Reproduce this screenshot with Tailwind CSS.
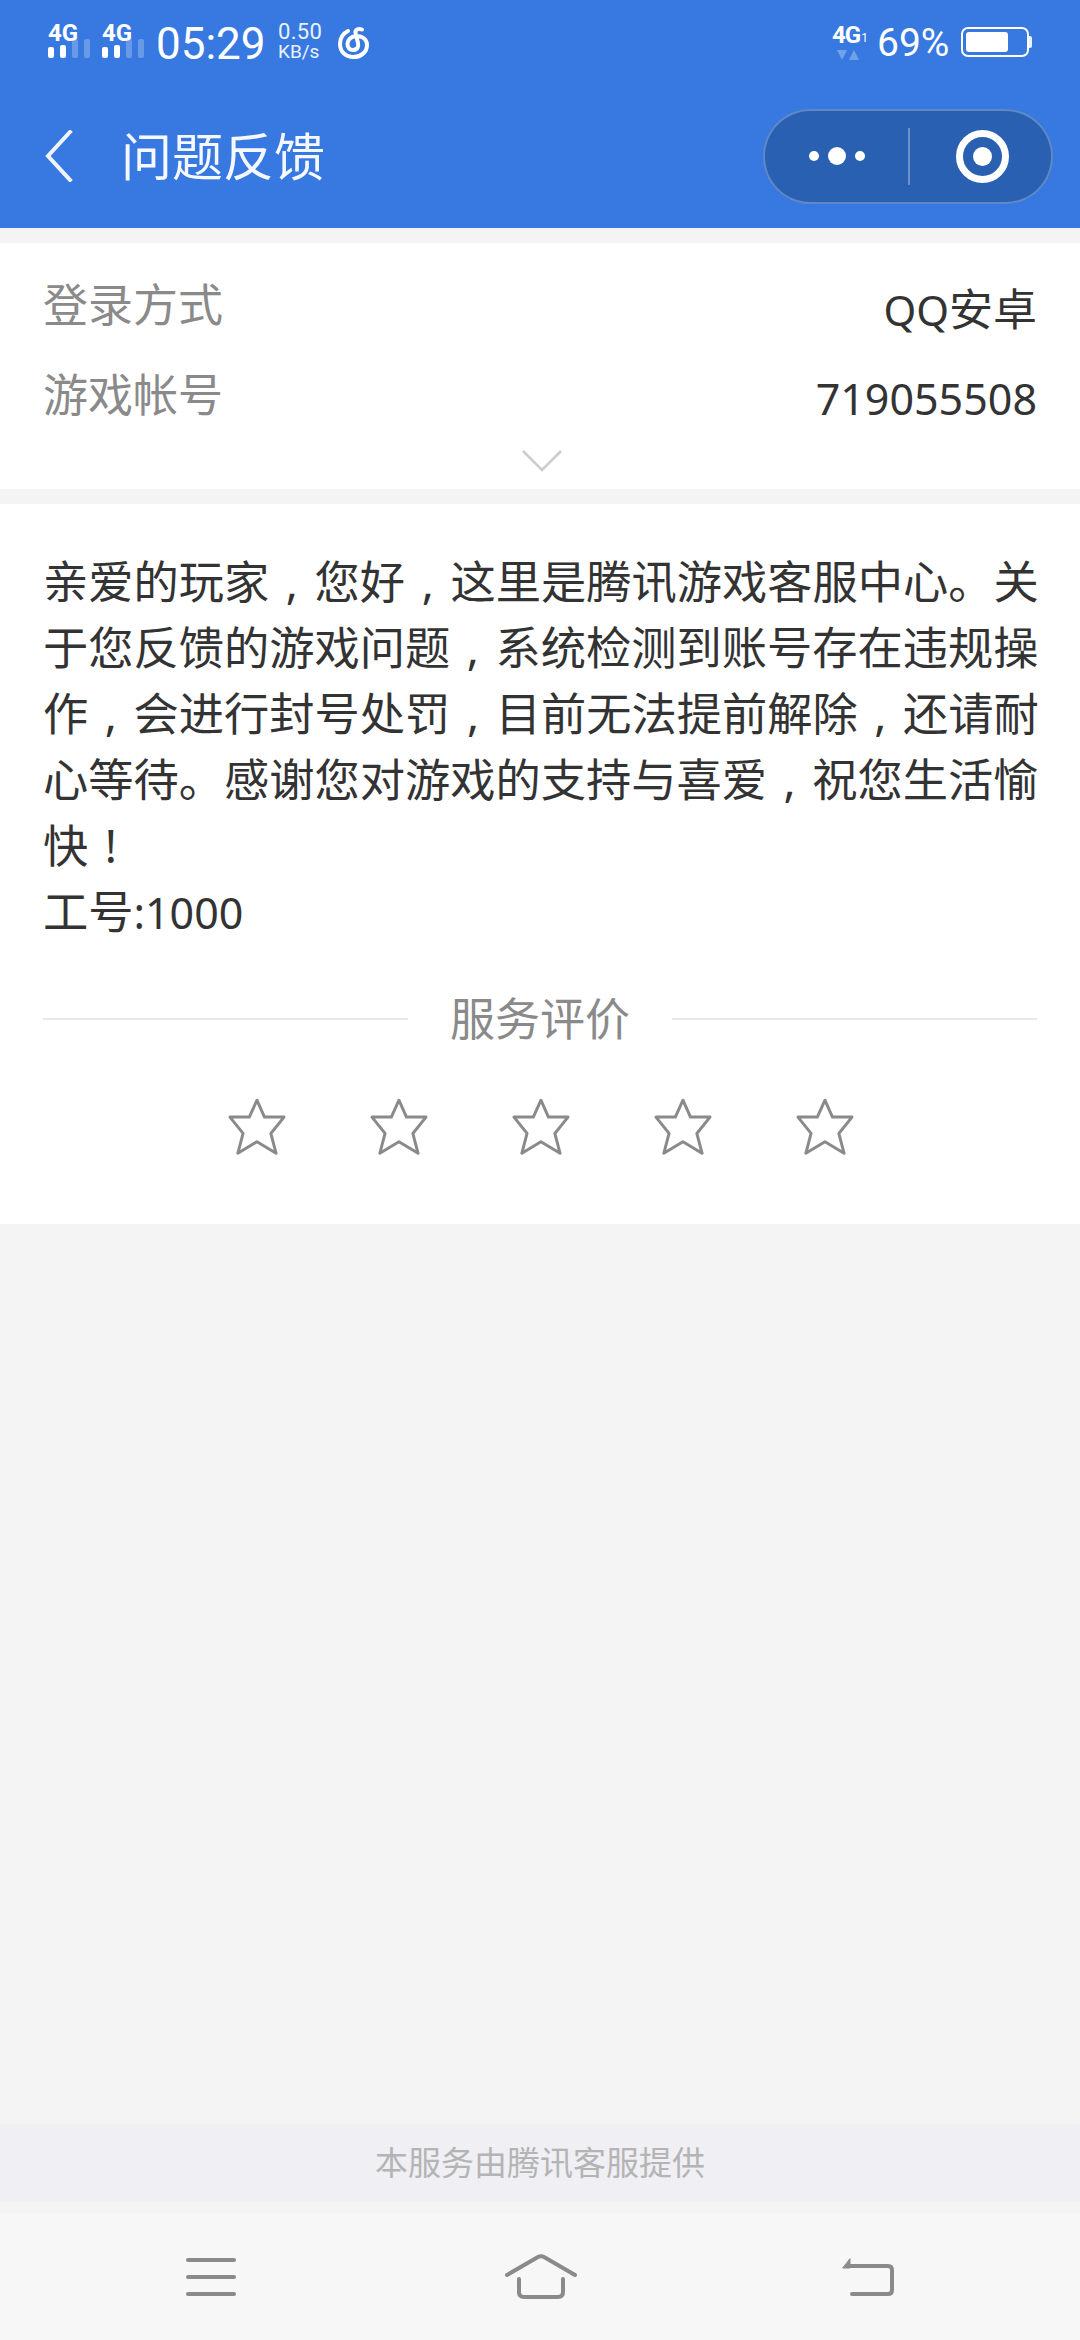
<!DOCTYPE html>
<html lang="zh-CN">
  <head>
    <meta charset="UTF-8" />
    <meta name="viewport" content="width=device-width, initial-scale=1.0" />
    <title>问题反馈</title>
    <script src="https://cdn.jsdelivr.net/npm/@tailwindcss/browser@4"></script>
  </head>
  <body class="bg-[#f4f4f4] font-['Noto_Sans','Noto_Sans_CJK_SC',sans-serif]">
    <div class="flex flex-col w-[1080px] h-[2340px] overflow-hidden">
      <!-- header: status bar + title bar -->
      <header class="bg-[#3779e0] text-white h-[228px] shrink-0">
        <div class="flex items-start h-[84px] pl-[48px] pr-[48px] font-['Roboto',sans-serif]">
          <!-- sim 1 -->
          <div class="w-[54px] pt-[20px]">
            <div class="text-[24px] leading-[26px] font-bold">4G</div>
            <div class="flex items-end gap-[6px] h-[19px] -mt-[7px]">
              <span class="w-[6px] h-[11px] rounded-[2px] bg-white"></span>
              <span class="w-[6px] h-[13px] rounded-[2px] bg-white"></span>
              <span class="w-[6px] h-[19px] rounded-[2px] bg-white/25"></span>
              <span class="w-[6px] h-[19px] rounded-[2px] bg-white/25"></span>
            </div>
          </div>
          <!-- sim 2 -->
          <div class="w-[54px] pt-[20px]">
            <div class="text-[24px] leading-[26px] font-bold">4G</div>
            <div class="flex items-end gap-[6px] h-[19px] -mt-[7px]">
              <span class="w-[6px] h-[11px] rounded-[2px] bg-white"></span>
              <span class="w-[6px] h-[13px] rounded-[2px] bg-white"></span>
              <span class="w-[6px] h-[19px] rounded-[2px] bg-white/25"></span>
              <span class="w-[6px] h-[19px] rounded-[2px] bg-white/25"></span>
            </div>
          </div>
          <div class="text-[44px] leading-[50px] pt-[19px] w-[122px] h-[84px]">05:29</div>
          <div class="pt-[21px] w-[60px] text-white/90">
            <div class="text-[22px] leading-[22px] tracking-[0.3px]">0.50</div>
            <div class="text-[19px] leading-[17px]">KB/s</div>
          </div>
          <!-- music app notification -->
          <svg class="mt-[26px]" width="31" height="33" viewBox="0 0 31 33" fill="none" stroke="white" stroke-width="4" stroke-linecap="round">
            <path d="M10 5 C4 8 2 13 2 18 C2 26 8 31 15.500 31 C23 31 29 26 29 19 C29 13 24 10 19 10 C13 10 9.500 14 9.500 18 C9.500 22 12 24 15 24 C19 24 21 21 20 17 L17.500 7 C17 4 20 2 24 3.500" />
          </svg>
          <div class="flex-1"></div>
          <!-- data type -->
          <div class="w-[45px] pt-[23px]">
            <div class="text-[24px] leading-[24px] font-bold tracking-[-1px]">4G<span class="text-[12px] font-normal align-[1px] ml-[1px]">1</span></div>
            <svg width="32" height="11" viewBox="0 0 32 11" fill="white">
              <path d="M5 0 H15 L10 10 Z" fill-opacity="0.3" />
              <path d="M17 10 H27 L22 0 Z" fill-opacity="0.3" />
            </svg>
          </div>
          <div class="text-[39px] leading-[44px] pt-[21px] w-[84px]">69%</div>
          <!-- battery -->
          <div class="flex items-center mt-[27px]">
            <div class="w-[68px] h-[30px] rounded-[7px] border-[2px] border-white p-[3px]">
              <div class="w-[42px] h-full rounded-[3px] bg-white"></div>
            </div>
            <div class="w-[3px] h-[12px] rounded-r-[2px] bg-white/90"></div>
          </div>
        </div>
        <div class="flex items-center h-[144px] pl-[45px] pr-[27px]">
          <svg width="28" height="52" viewBox="0 0 28 52" fill="none" stroke="#eef3fc" stroke-width="4" stroke-linecap="square">
            <path d="M25 2 L3 26 L25 50" />
          </svg>
          <h1 class="ml-[48px] text-[51px] leading-none font-normal text-white/95">问题反馈</h1>
          <div class="flex-1"></div>
          <!-- capsule -->
          <div class="flex items-center w-[290px] h-[95px] rounded-full bg-[#2a60b2] border-[2px] border-white/25">
            <div class="flex items-center justify-center gap-[9px] w-[143px]">
              <span class="w-[10px] h-[10px] rounded-full bg-white"></span>
              <span class="w-[18px] h-[18px] rounded-full bg-white"></span>
              <span class="w-[10px] h-[10px] rounded-full bg-white"></span>
            </div>
            <div class="w-[2px] h-[57px] bg-white/30"></div>
            <div class="flex flex-1 items-center justify-center pl-[4px]">
              <div class="flex items-center justify-center w-[53px] h-[53px] rounded-full border-[7px] border-white">
                <span class="w-[19px] h-[19px] rounded-full bg-white"></span>
              </div>
            </div>
          </div>
        </div>
      </header>

      <main class="flex-1 flex flex-col pt-[15px]">
        <!-- account info -->
        <section class="bg-white h-[246px] px-[43px]">
          <div class="flex justify-between pt-[32px] h-[122px]">
            <span class="text-[45px] leading-[60px] text-[#8a8a8a]">登录方式</span>
            <span class="text-[44px] leading-[60px] text-[#333] mt-[4px]"><span class="text-[42px]">QQ</span>安卓</span>
          </div>
          <div class="flex justify-between h-[85px]">
            <span class="text-[45px] leading-[60px] text-[#8a8a8a]">游戏帐号</span>
            <span class="text-[43px] leading-[60px] text-[#333] mt-[4px]">719055508</span>
          </div>
          <svg class="mx-auto translate-x-[2px]" width="40" height="22" viewBox="0 0 40 22" fill="none" stroke="#cccccc" stroke-width="2.500">
            <path d="M1 1 L20 20 L39 1" />
          </svg>
        </section>

        <!-- reply: one div per line, narrow punctuation centred in a full-width cell -->
        <section class="bg-white mt-[15px] h-[720px] px-[43px] pt-[45px]">
          <div class="text-[45.25px] leading-[66px] text-[#333] whitespace-nowrap">
            <div>亲爱的玩家<span class="px-[16.6px]">,</span>您好<span class="px-[16.6px]">,</span>这里是腾讯游戏客服中心。关</div>
            <div>于您反馈的游戏问题<span class="px-[16.6px]">,</span>系统检测到账号存在违规操</div>
            <div>作<span class="px-[16.6px]">,</span>会进行封号处罚<span class="px-[16.6px]">,</span>目前无法提前解除<span class="px-[16.6px]">,</span>还请耐</div>
            <div>心等待。感谢您对游戏的支持与喜爱<span class="px-[16.6px]">,</span>祝您生活愉</div>
            <div>快<span class="px-[16.6px]">!</span></div>
            <div>工号<span class="text-[43px]">:1000</span></div>
          </div>
          <div class="flex items-center mt-[43px] h-[60px]">
            <div class="flex-1 h-[2px] bg-[#e8e8e8]"></div>
            <span class="w-[264px] text-center text-[45px] leading-[60px] text-[#8a8a8a]">服务评价</span>
            <div class="flex-1 h-[2px] bg-[#e8e8e8]"></div>
          </div>
          <div class="flex justify-center gap-[84px] mt-[49px] ml-[2px]">
            <svg width="58" height="58" viewBox="-0.500 -0.500 58.500 58" fill="none" stroke="#8a8a8a" stroke-width="3" stroke-linejoin="round">
              <path d="M28.700 1.500 L36.300 18.500 H56 L42.700 35 L48 55 L28.700 43.300 L9.400 55 L14.700 35 L1.500 18.500 H21 Z" />
            </svg>
            <svg width="58" height="58" viewBox="-0.500 -0.500 58.500 58" fill="none" stroke="#8a8a8a" stroke-width="3" stroke-linejoin="round">
              <path d="M28.700 1.500 L36.300 18.500 H56 L42.700 35 L48 55 L28.700 43.300 L9.400 55 L14.700 35 L1.500 18.500 H21 Z" />
            </svg>
            <svg width="58" height="58" viewBox="-0.500 -0.500 58.500 58" fill="none" stroke="#8a8a8a" stroke-width="3" stroke-linejoin="round">
              <path d="M28.700 1.500 L36.300 18.500 H56 L42.700 35 L48 55 L28.700 43.300 L9.400 55 L14.700 35 L1.500 18.500 H21 Z" />
            </svg>
            <svg width="58" height="58" viewBox="-0.500 -0.500 58.500 58" fill="none" stroke="#8a8a8a" stroke-width="3" stroke-linejoin="round">
              <path d="M28.700 1.500 L36.300 18.500 H56 L42.700 35 L48 55 L28.700 43.300 L9.400 55 L14.700 35 L1.500 18.500 H21 Z" />
            </svg>
            <svg width="58" height="58" viewBox="-0.500 -0.500 58.500 58" fill="none" stroke="#8a8a8a" stroke-width="3" stroke-linejoin="round">
              <path d="M28.700 1.500 L36.300 18.500 H56 L42.700 35 L48 55 L28.700 43.300 L9.400 55 L14.700 35 L1.500 18.500 H21 Z" />
            </svg>
          </div>
        </section>

        <div class="flex-1"></div>

        <footer class="flex items-center justify-center h-[78px] bg-[#efeff4] text-[33px] text-[#b4b4b4] mb-[11px]">本服务由腾讯客服提供</footer>
      </main>

      <!-- system navigation -->
      <nav class="shrink-0 h-[127px] bg-[#f7f7f7] flex items-center justify-between px-[186px]">
        <div class="flex flex-col gap-[13px] w-[50px]">
          <span class="h-[4px] rounded-full bg-[#8a8a8a]"></span>
          <span class="h-[4px] rounded-full bg-[#8a8a8a]"></span>
          <span class="h-[4px] rounded-full bg-[#8a8a8a]"></span>
        </div>
        <svg class="ml-[4px]" width="72" height="46" viewBox="0 0 72 46" fill="none" stroke="#8a8a8a" stroke-width="4" stroke-linecap="round" stroke-linejoin="round">
          <path d="M2 21 L33 3 Q36 1.500 39 3 L70 21" />
          <path d="M14 25 V38 Q14 43 19 43 H53 Q58 43 58 38 V25" />
        </svg>
        <svg width="52" height="42" viewBox="0 0 52 42" fill="none" stroke="#8a8a8a" stroke-width="4" stroke-linecap="round" stroke-linejoin="round">
          <path d="M8 10 H46 Q50 10 50 14 V34 Q50 38 46 38 H10" />
          <path d="M8 3 V12 H1 Z" fill="#8a8a8a" stroke-width="1" />
        </svg>
      </nav>
    </div>
  </body>
</html>
